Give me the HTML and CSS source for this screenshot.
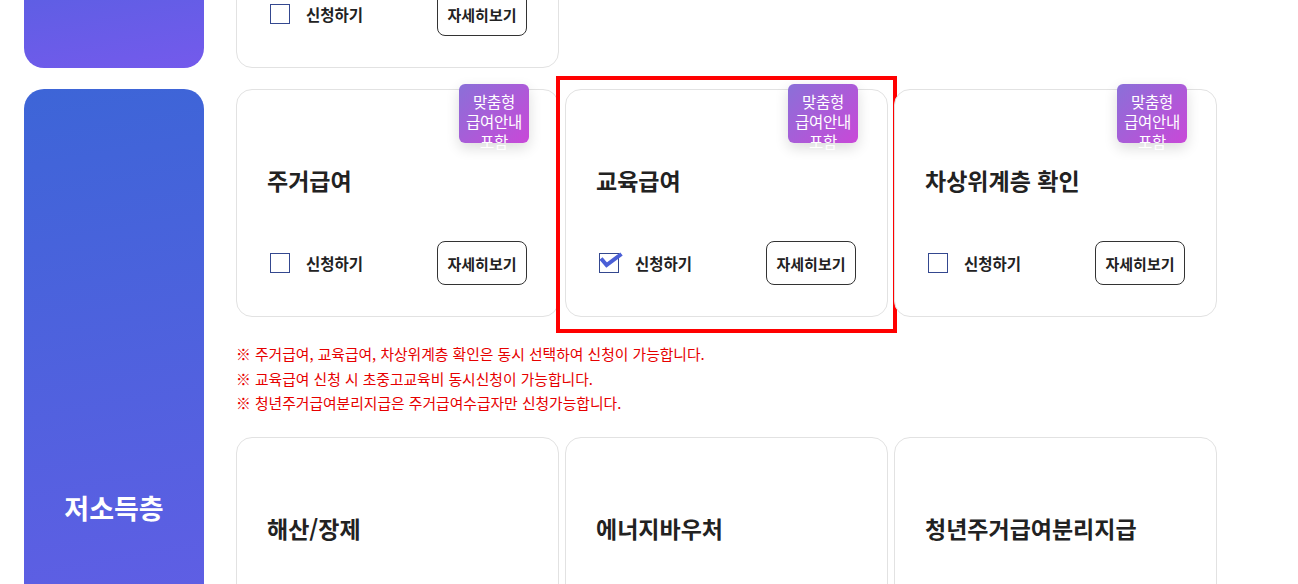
FILE: index.html
```html
<!DOCTYPE html>
<html lang="ko">
<head>
    <meta charset="UTF-8">
    <meta name="viewport" content="width=device-width, initial-scale=1.0">
    <title>복지서비스 신청</title>
    <link rel="stylesheet" href="styles.css">
</head>
<body>

    <main class="benefit">

        <!-- previous group (scrolled out of view) -->
        <section class="group">
            <div class="group-label">기초생활</div>
            <div class="group-body">
                <div class="card-grid">
                    <div class="card">
                        <h3 class="card-title">긴급복지</h3>
                        <div class="card-foot">
                            <label class="apply"><input type="checkbox"><span class="box"></span>신청하기</label>
                            <button class="more">자세히보기</button>
                        </div>
                    </div>
                </div>
            </div>
        </section>

        <section class="group group-low">
            <div class="group-label">저소득층</div>
            <div class="group-body">
                <div class="card-grid">
                    <div class="card">
                        <span class="badge">맞춤형<br>급여안내<br>포함</span>
                        <h3 class="card-title">주거급여</h3>
                        <div class="card-foot">
                            <label class="apply"><input type="checkbox"><span class="box"></span>신청하기</label>
                            <button class="more">자세히보기</button>
                        </div>
                    </div>
                    <div class="card is-picked">
                        <span class="badge">맞춤형<br>급여안내<br>포함</span>
                        <h3 class="card-title">교육급여</h3>
                        <div class="card-foot">
                            <label class="apply">
                                <input type="checkbox" checked>
                                <span class="box">
                                    <svg class="tick" width="26" height="20" viewBox="0 0 26 20">
                                        <path d="M2 5.5 L7.6 12 L22.5 1" fill="none" stroke="#4a5fd6" stroke-width="4" stroke-linejoin="miter"/>
                                    </svg>
                                </span>신청하기
                            </label>
                            <button class="more">자세히보기</button>
                        </div>
                    </div>
                    <div class="card">
                        <span class="badge">맞춤형<br>급여안내<br>포함</span>
                        <h3 class="card-title">차상위계층 확인</h3>
                        <div class="card-foot">
                            <label class="apply"><input type="checkbox"><span class="box"></span>신청하기</label>
                            <button class="more">자세히보기</button>
                        </div>
                    </div>
                </div>

                <ul class="notes">
                    <li>※ 주거급여, 교육급여, 차상위계층 확인은 동시 선택하여 신청이 가능합니다.</li>
                    <li>※ 교육급여 신청 시 초중고교육비 동시신청이 가능합니다.</li>
                    <li>※ 청년주거급여분리지급은 주거급여수급자만 신청가능합니다.</li>
                </ul>

                <div class="card-grid">
                    <div class="card">
                        <h3 class="card-title">해산/장제</h3>
                        <div class="card-foot">
                            <label class="apply"><input type="checkbox"><span class="box"></span>신청하기</label>
                            <button class="more">자세히보기</button>
                        </div>
                    </div>
                    <div class="card">
                        <h3 class="card-title">에너지바우처</h3>
                        <div class="card-foot">
                            <label class="apply"><input type="checkbox"><span class="box"></span>신청하기</label>
                            <button class="more">자세히보기</button>
                        </div>
                    </div>
                    <div class="card">
                        <h3 class="card-title">청년주거급여분리지급</h3>
                        <div class="card-foot">
                            <label class="apply"><input type="checkbox"><span class="box"></span>신청하기</label>
                            <button class="more">자세히보기</button>
                        </div>
                    </div>
                    <div class="card">
                        <h3 class="card-title">초중고교육비</h3>
                        <div class="card-foot">
                            <label class="apply"><input type="checkbox"><span class="box"></span>신청하기</label>
                            <button class="more">자세히보기</button>
                        </div>
                    </div>
                </div>
            </div>
        </section>

    </main>

</body>
</html>
```

FILE: styles.css
```css
body {
    font-family: "Noto Sans CJK KR", "Noto Sans", sans-serif;
    margin: 0;
    padding: 0;
    background-color: #fff;
    color: #222;
}

.benefit {
    margin-top: -160px;
    padding-left: 24px;
}

.group {
    display: flex;
    gap: 32px;
    margin-bottom: 21px;
}

.group-label {
    flex: 0 0 180px;
    display: flex;
    align-items: center;
    justify-content: center;
    border-radius: 20px;
    background: linear-gradient(170deg, #3d65d7 0%, #745aec 100%);
    color: #fff;
    font-size: 27px;
    font-weight: 700;
}

.group-body {
    width: 981px;
}

.group-low .group-body {
    padding-bottom: 12px;
}

.card-grid {
    display: grid;
    grid-template-columns: repeat(3, 323px);
    gap: 21px 6px;
}

.card {
    position: relative;
    height: 228px;
    box-sizing: border-box;
    padding: 75px 31px 31px 30px;
    border: 1px solid #e2e2e2;
    border-radius: 16px;
    background-color: #fff;
    display: flex;
    flex-direction: column;
}

.card.is-picked::after {
    content: "";
    position: absolute;
    top: -14px;
    left: -10px;
    right: -10px;
    bottom: -17px;
    border: 4px solid #ff0000;
    pointer-events: none;
}

.badge {
    position: absolute;
    top: -6px;
    right: 29px;
    width: 70px;
    height: 59px;
    box-sizing: border-box;
    padding-top: 7px;
    border-radius: 6px;
    background: linear-gradient(135deg, #8a70d8 0%, #c948d8 100%);
    box-shadow: 0 5px 14px rgba(0, 0, 0, 0.14);
    color: #fff;
    font-size: 15.5px;
    line-height: 20px;
    letter-spacing: -0.3px;
    text-align: center;
}

.card-title {
    margin: 0;
    font-size: 23px;
    font-weight: 700;
    line-height: 31px;
    color: #222;
}

.card-foot {
    margin-top: 45px;
    height: 44px;
    display: flex;
    align-items: center;
    justify-content: space-between;
}

.apply {
    display: flex;
    align-items: center;
    gap: 16px;
    margin-left: 3px;
    font-size: 15.5px;
    font-weight: 700;
    color: #222;
    cursor: pointer;
}

.apply input {
    display: none;
}

.box {
    position: relative;
    width: 20px;
    height: 20px;
    box-sizing: border-box;
    border: 1.5px solid #34488f;
}

.tick {
    position: absolute;
    left: -1.5px;
    top: -1.5px;
    overflow: visible;
    display: none;
}

.apply input:checked + .box .tick {
    display: block;
}

.more {
    width: 90px;
    height: 44px;
    padding: 0;
    border: 1px solid #333;
    border-radius: 8px;
    background-color: #fff;
    font-family: inherit;
    font-size: 15px;
    font-weight: 700;
    color: #222;
    cursor: pointer;
}

.notes {
    list-style: none;
    margin: 25px 0 21px;
    padding: 0;
    font-size: 14.8px;
    line-height: 24.5px;
    color: #e60000;
}
```
